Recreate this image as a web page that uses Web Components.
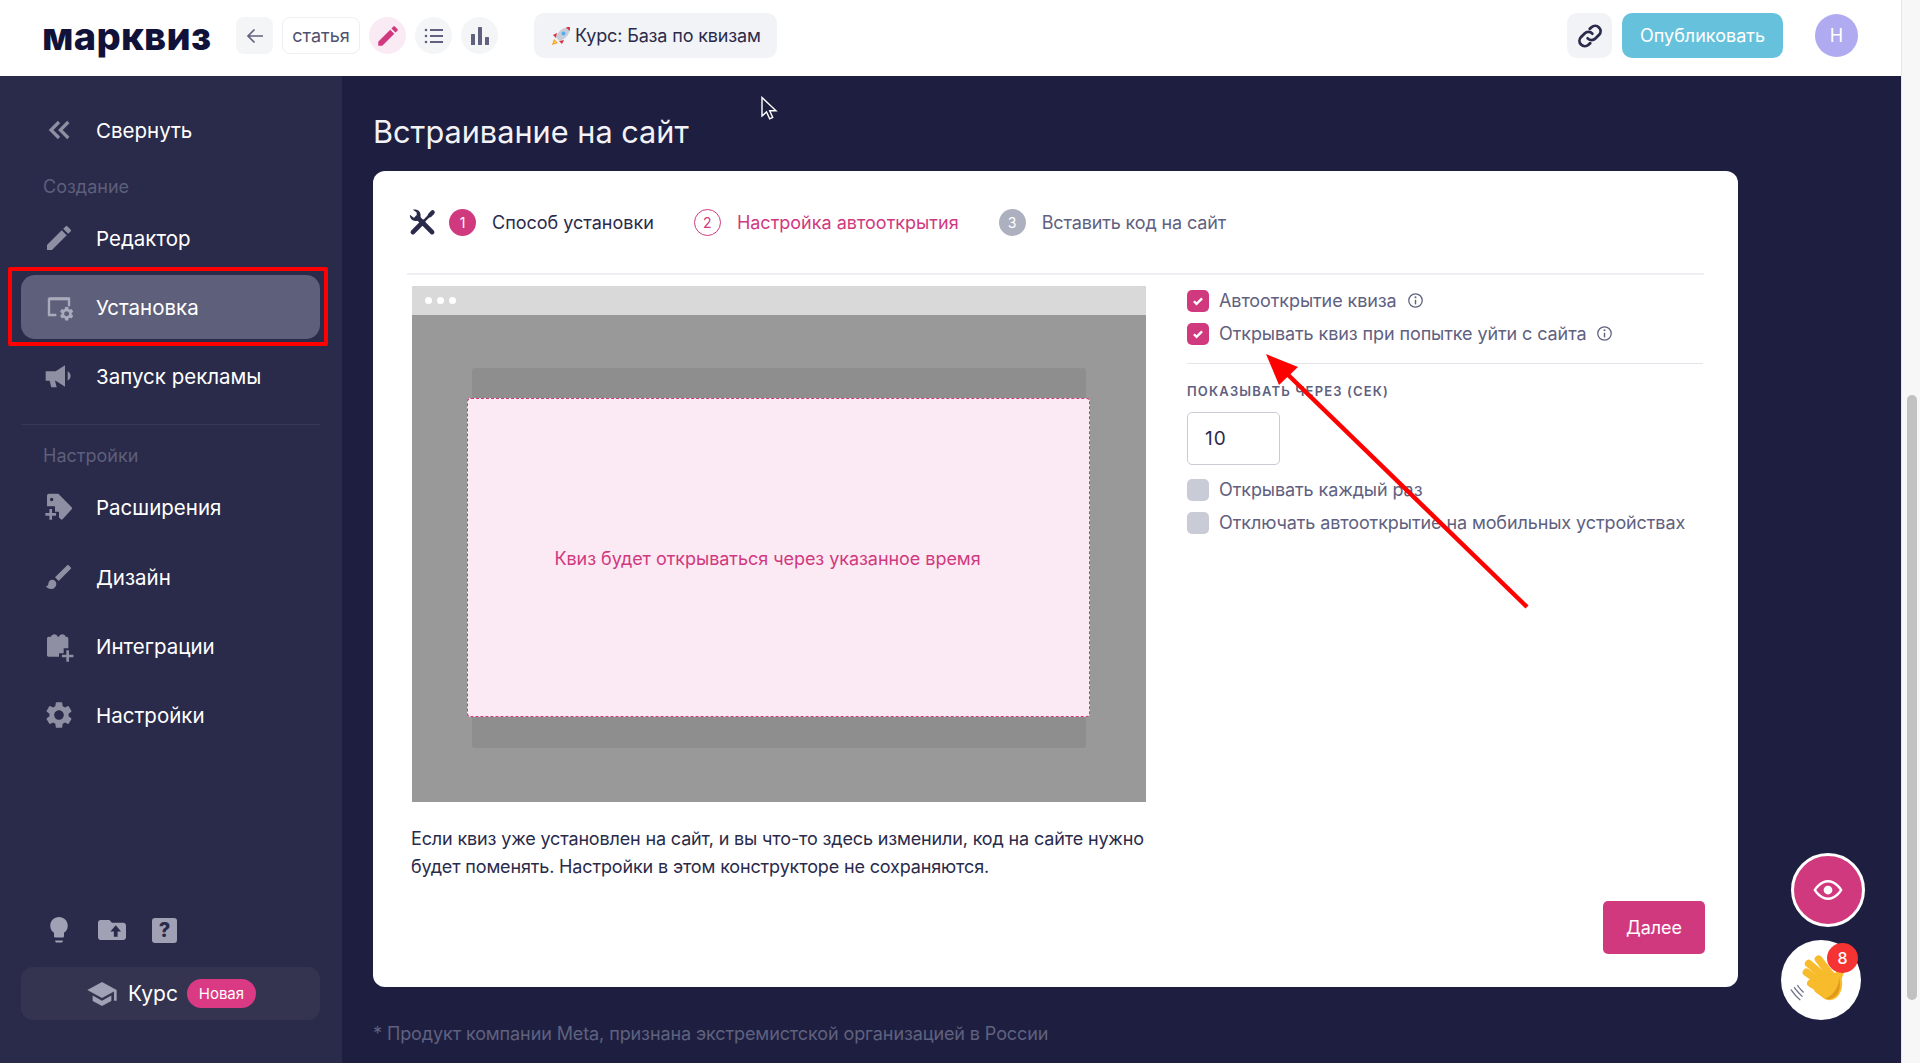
<!DOCTYPE html>
<html lang="ru">
<head>
<meta charset="utf-8">
<title>Марквиз</title>
<style>
  html, body { margin: 0; height: 100%; overflow: hidden; }
  body { font-family: Inter, "Noto Sans", sans-serif; background: #1e1f40; }
</style>
</head>
<body>
<app-shell>
  <app-header slot="header"></app-header>
  <app-sidebar slot="sidebar"></app-sidebar>
  <app-page slot="page"></app-page>
</app-shell>

<script>
const GEAR = 'M19.14 12.94c.04-.3.06-.61.06-.94 0-.32-.02-.64-.07-.94l2.03-1.58c.18-.14.23-.41.12-.61l-1.92-3.32c-.12-.22-.37-.29-.59-.22l-2.39.96c-.5-.38-1.03-.7-1.62-.94L14.4 2.81c-.04-.24-.24-.41-.48-.41h-3.84c-.24 0-.43.17-.47.41L9.25 5.35c-.59.24-1.13.57-1.62.94l-2.39-.96c-.22-.08-.47 0-.59.22L2.74 8.87c-.12.21-.08.47.12.61l2.03 1.58c-.05.3-.09.63-.09.94s.02.64.07.94l-2.03 1.58c-.18.14-.23.41-.12.61l1.92 3.32c.12.22.37.29.59.22l2.39-.96c.5.38 1.03.7 1.62.94l.36 2.54c.05.24.24.41.48.41h3.84c.24 0 .44-.17.47-.41l.36-2.54c.59-.24 1.13-.56 1.62-.94l2.39.96c.22.08.47 0 .59-.22l1.92-3.32c.12-.22.07-.47-.12-.61l-2.01-1.58zM12 15.6c-1.98 0-3.6-1.62-3.6-3.6s1.62-3.6 3.6-3.6 3.6 1.62 3.6 3.6-1.62 3.6-3.6 3.6z';
const PENCIL = 'M3 17.25V21h3.75L17.81 9.94l-3.75-3.75L3 17.25zM20.71 7.04c.39-.39.39-1.02 0-1.41l-2.34-2.34c-.39-.39-1.02-.39-1.41 0l-1.83 1.83 3.75 3.75 1.83-1.83z';

const ICONS = {
  pencil: `<path d="${PENCIL}"/>`,
  collapse: `<path d="M12 6l-6 6 6 6M19 6l-6 6 6 6" fill="none" stroke="currentColor" stroke-width="2.4"/>`,
  install: `<path d="M4 5h15v2H4z"/><path d="M4.5 5.5h15v6M10 18H4.5V5.5" fill="none" stroke="currentColor" stroke-width="1.8"/><g transform="translate(11.5 10.8) scale(.52)"><path d="${GEAR}"/></g>`,
  megaphone: `<path d="M2 8.5h7.5L16.5 4v16l-7-4.500H9l1.300 5H6.200L5 15.500H2z"/><path d="M18.500 8.500c1.300.7 2.200 2 2.200 3.500s-.9 2.800-2.200 3.500z"/>`,
  extension: `<path fill-rule="evenodd" d="M3 3.500c0-.8.7-1.500 1.500-1.500h7l10 10.200c.4.4.4 1 0 1.400l-6.800 7.500c-.4.400-1 .4-1.400 0l-1.300-1.300v-4.300H9V11.500H3zM6.500 5a1.300 1.300 0 1 0 0 2.600 1.300 1.300 0 0 0 0-2.600z"/><path d="M4.800 13.500h2v3h3v2h-3v3h-2v-3h-3v-2h3z"/>`,
  brush: `<path d="M7 14c-1.660 0-3 1.340-3 3 0 1.310-1.160 2-2 2 .92 1.220 2.490 2 4 2 2.210 0 4-1.790 4-4 0-1.660-1.340-3-3-3zm13.710-9.370l-1.340-1.340c-.39-.39-1.020-.39-1.410 0L9 12.250 11.750 15l8.960-8.960c.39-.39.39-1.030 0-1.410z"/>`,
  integrations: `<path d="M3 6.500c0-.8.5-1.500 1.300-1.500H6c.3-2.500 4.700-2.500 5 0h1c.3-2.500 4.700-2.500 5 0h.7c.8 0 1.300.7 1.300 1.500v7.200h-3.500v3.800H12V20H4.300c-.8 0-1.300-.6-1.300-1.300z"/><path d="M17.500 15.200h2v3.300h3.300v2h-3.300v3.300h-2v-3.300h-3.300v-2h3.300z"/>`,
  gear: `<path d="${GEAR}"/>`,
  bulb: `<path d="M9 21c0 .5.4 1 1 1h4c.6 0 1-.5 1-1v-.6H9zM12 1.500C8.100 1.500 5 4.600 5 8.500c0 2.400 1.200 4.500 3 5.700V17c0 .5.4 1 1 1h6c.6 0 1-.5 1-1v-2.800c1.800-1.200 3-3.300 3-5.700 0-3.900-3.100-7-7-7z"/>`,
  folder: `<path d="M20.500 6.500H12L10 4.500H3.500C2.400 4.500 1.500 5.400 1.500 6.500v11c0 1.100.9 2 2 2h17c1.100 0 2-.9 2-2v-9c0-1.100-.9-2-2-2z"/><path d="M14.800 8.500l4 4.600h-2.600v3.900h-2.800v-3.900h-2.600z" fill="#2a2a4a"/>`,
  cap: `<path d="M5 13.180v4L12 21l7-3.820v-4L12 17l-7-3.820zM12 3L1 9l11 6 9-4.910V17h2V9L12 3z"/>`,
  back: `<path d="M20 12H5M11.500 5.500L5 12l6.500 6.500" fill="none" stroke="currentColor" stroke-width="1.700"/>`,
  list: `<g fill="none" stroke="currentColor" stroke-width="1.800"><path d="M8 6h13M8 12h13M8 18h13"/></g><circle cx="4" cy="6" r="1.300"/><circle cx="4" cy="12" r="1.300"/><circle cx="4" cy="18" r="1.300"/>`,
  chart: `<rect x="3" y="10" width="4" height="11" rx=".6"/><rect x="10" y="3" width="4" height="18" rx=".6"/><rect x="17" y="13" width="4" height="8" rx=".6"/>`,
  link: `<g fill="none" stroke="currentColor" stroke-width="2.400" stroke-linecap="round"><path d="M10 14a4.600 4.600 0 0 0 6.600.2l3.200-3.200a4.600 4.600 0 0 0-6.500-6.500l-1.500 1.400"/><path d="M14 10a4.600 4.600 0 0 0-6.600-.2l-3.200 3.200a4.600 4.600 0 0 0 6.500 6.500l1.500-1.400"/></g>`,
  tools: `<g fill="none" stroke="currentColor" stroke-linecap="round"><path d="M7.500 7.500L20.500 20.500" stroke-width="4.200"/><path d="M3.500 20.500L12.500 11.500" stroke-width="4.200"/><path d="M12.500 11.500L18 6" stroke-width="2.200"/><path d="M18.500 5.500L21 3" stroke-width="3.800"/></g><path d="M.8 5.200L4.200 7.800 7 6 6.700 2.800 3.400.6C6.800-.4 10.300 1.600 10.300 5.200v2.500L7.400 10.400C4 11.300.5 9.200.8 5.200z"/>`,
  eye: `<path d="M1.500 12S5.500 5 12 5s10.500 7 10.500 7-4 7-10.500 7S1.500 12 1.500 12z" fill="none" stroke="currentColor" stroke-width="2"/><circle cx="12" cy="12" r="3.500"/>`,
  info: `<circle cx="12" cy="12" r="9.500" fill="none" stroke="currentColor" stroke-width="1.800"/><path d="M12 11v6.500" stroke="currentColor" stroke-width="2"/><circle cx="12" cy="7.500" r="1.400"/>`,
  check: `<path d="M5 12.500l4.500 4.500L19 7.500" fill="none" stroke="currentColor" stroke-width="4"/>`,
};

class AppIcon extends HTMLElement {
  connectedCallback() {
    const size = this.getAttribute('size') || 24;
    this.attachShadow({mode: 'open'}).innerHTML = `
      <style>:host { display: inline-flex; flex: none; } svg { display: block; fill: currentColor; overflow: visible; }</style>
      <svg width="${size}" height="${size}" viewBox="0 0 24 24">${ICONS[this.getAttribute('name')]}</svg>`;
  }
}
customElements.define('app-icon', AppIcon);

const shellTemplate = document.createElement('template');
shellTemplate.innerHTML = `
  <style>
    :host {
      display: grid;
      grid: 76px 987px / 342px 1559px 19px;
      grid-template-areas: "header header bar" "sidebar page bar";
      height: 1063px;
      overflow: hidden;
    }
    .header { grid-area: header; }
    .sidebar { grid-area: sidebar; display: grid; }
    .page { grid-area: page; display: grid; }
    .bar {
      grid-area: bar;
      background: #f7f7f8;
      border-left: 1px solid #e6e6e8;
      padding: 395px 3px 63px 5px;
      box-sizing: border-box;
      display: flex;
    }
    .bar i { flex: 1; background: #c1c1c1; border-radius: 6px; }
  </style>
  <div class="header"><slot name="header"></slot></div>
  <div class="sidebar"><slot name="sidebar"></slot></div>
  <div class="page"><slot name="page"></slot></div>
  <div class="bar"><i></i></div>
`;
class AppShell extends HTMLElement {
  constructor() {
    super();
    this.attachShadow({mode: 'open'});
    this.shadowRoot.append(shellTemplate.content.cloneNode(true));
  }
}
customElements.define('app-shell', AppShell);

const headerTemplate = document.createElement('template');
headerTemplate.innerHTML = `
  <style>
    :host {
      display: flex;
      align-items: center;
      height: 76px;
      background: #fff;
      padding: 0 43px 5px 41px;
      box-sizing: border-box;
      color: #5f617f;
    }
    .logo {
      font-size: 38px;
      font-weight: 800;
      color: #11123a;
      width: 194px;
      margin-left: 1px;
      letter-spacing: .3px;
      line-height: 46px;
    }
    .btn {
      height: 37px;
      width: 37px;
      background: #f4f5f7;
      border-radius: 8px;
      display: flex;
      align-items: center;
      justify-content: center;
      margin-right: 9px;
      box-sizing: border-box;
    }
    .round { border-radius: 50%; }
    .name {
      width: 78px;
      background: #fff;
      border: 1px solid #eeeff2;
      font-size: 18px;
      color: #4f5170;
    }
    .on { background: #faeaf3; color: #d1397f; }
    .course {
      margin-left: 36px;
      padding-left: 17px;
      height: 45px;
      width: 243px;
      background: #f2f3f6;
      border-radius: 10px;
      box-sizing: border-box;
      display: flex;
      align-items: center;
      gap: 4px;
      font-size: 18px;
      letter-spacing: -.15px;
      color: #2a2b4b;
      white-space: nowrap;
    }
    .spacer { flex: 1; }
    .share {
      width: 45px;
      height: 45px;
      margin-right: 10px;
      background: #f2f3f6;
      border-radius: 10px;
      color: #2a2b4b;
      display: flex;
      align-items: center;
      justify-content: center;
    }
    .publish {
      width: 161px;
      height: 45px;
      background: #66c2dc;
      border-radius: 10px;
      color: #fff;
      font-size: 18px;
      display: flex;
      align-items: center;
      justify-content: center;
    }
    .avatar {
      margin-left: 32px;
      width: 43px;
      height: 43px;
      border-radius: 50%;
      background: #b0aaf0;
      color: #fff;
      font-size: 18px;
      display: flex;
      align-items: center;
      justify-content: center;
    }
  </style>
  <div class="logo">марквиз</div>
  <div class="btn"><app-icon name="back" size="24"></app-icon></div>
  <div class="btn name">статья</div>
  <div class="btn round on"><app-icon name="pencil" size="26"></app-icon></div>
  <div class="btn round"><app-icon name="list" size="24"></app-icon></div>
  <div class="btn round" style="margin-right:0"><app-icon name="chart" size="24"></app-icon></div>
  <div class="course">
    <svg width="20" height="20" viewBox="0 0 20 20">
      <path d="M3 13l-2 6 6-2z" fill="#f59a23"/>
      <path d="M3.500 14.500l-1 3 3-1z" fill="#ffd23f"/>
      <path d="M2 9l4-2-1 5zM11 18l2-4-5 1z" fill="#dd2e44"/>
      <path d="M5 11.500C7 5 12 1 19 1c0 7-4 12-10.500 14z" fill="#c6cdd8"/>
      <path d="M15 1.400c1.500-.3 2.800-.4 4-.4 0 1.200-.1 2.600-.4 4z" fill="#dd2e44"/>
      <circle cx="12.500" cy="7.500" r="2" fill="#55acee"/>
    </svg>
    <span>Курс: База по квизам</span>
  </div>
  <div class="spacer"></div>
  <div class="share"><app-icon name="link" size="28"></app-icon></div>
  <div class="publish">Опубликовать</div>
  <div class="avatar">Н</div>
`;
class AppHeader extends HTMLElement {
  constructor() {
    super();
    this.attachShadow({mode: 'open'});
    this.shadowRoot.append(headerTemplate.content.cloneNode(true));
  }
}
customElements.define('app-header', AppHeader);

const navTemplate = document.createElement('template');
navTemplate.innerHTML = `
  <style>
    :host {
      display: flex;
      align-items: center;
      position: relative;
      height: 64px;
      margin-bottom: 5px;
      padding-left: 22px;
      border-radius: 14px;
      font-size: 20.500px;
      color: #fff;
    }
    :host([active]) { background: #5e5f7a; }
    :host([marked])::after {
      content: "";
      position: absolute;
      inset: -8px -8px -7px -13px;
      border: 4px solid #f00;
      border-radius: 2px;
    }
    .icon { width: 32px; margin-right: 21px; color: #8e8fa3; display: flex; }
    :host([active]) .icon { color: #a9aabb; }
  </style>
  <div class="icon"></div>
  <slot></slot>
`;
class NavItem extends HTMLElement {
  constructor() {
    super();
    this.attachShadow({mode: 'open'});
    this.shadowRoot.append(navTemplate.content.cloneNode(true));
  }
  connectedCallback() {
    const icon = document.createElement('app-icon');
    icon.setAttribute('name', this.getAttribute('icon'));
    icon.setAttribute('size', this.getAttribute('icon-size') || 32);
    this.shadowRoot.querySelector('.icon').append(icon);
  }
}
customElements.define('nav-item', NavItem);

const sidebarTemplate = document.createElement('template');
sidebarTemplate.innerHTML = `
  <style>
    :host {
      display: flex;
      flex-direction: column;
      background: #2a2a4a;
      padding: 22px 22px 43px 21px;
      box-sizing: border-box;
      height: 987px;
    }
    .label {
      font-size: 18px;
      color: #5e5f7b;
      padding-left: 22px;
      height: 44px;
      line-height: 49px;
    }
    .label.second { height: 50px; line-height: 62px; }
    hr { border: 0; height: 1px; background: #373757; margin: 16px 0 0; }
    .tools {
      margin-top: auto;
      display: flex;
      align-items: center;
      padding-left: 23px;
      margin-bottom: 22px;
      color: #a0a1b4;
      height: 30px;
    }
    .tools app-icon { margin-right: 22px; }
    .help {
      width: 25px;
      height: 25px;
      background: #a0a1b4;
      border-radius: 3px;
      color: #2a2a4a;
      font-size: 20px;
      font-weight: 800;
      text-align: center;
      line-height: 25px;
      margin-left: 2px;
    }
    .course {
      height: 53px;
      background: #353450;
      border-radius: 12px;
      display: flex;
      align-items: center;
      padding-left: 65px;
      color: #fff;
      font-size: 21px;
    }
    .course app-icon { color: #a0a1b4; margin-right: 10px; }
    .badge {
      margin-left: 9px;
      width: 69px;
      height: 29px;
      background: #d93a83;
      border-radius: 15px;
      font-size: 15px;
      display: flex;
      align-items: center;
      justify-content: center;
    }
  </style>
  <nav-item icon="collapse" style="margin-bottom:0">Свернуть</nav-item>
  <div class="label">Создание</div>
  <nav-item icon="pencil">Редактор</nav-item>
  <nav-item icon="install" active marked>Установка</nav-item>
  <nav-item icon="megaphone" style="margin-bottom:0">Запуск рекламы</nav-item>
  <hr>
  <div class="label second">Настройки</div>
  <nav-item icon="extension" style="margin-bottom:6px">Расширения</nav-item>
  <nav-item icon="brush">Дизайн</nav-item>
  <nav-item icon="integrations">Интеграции</nav-item>
  <nav-item icon="gear">Настройки</nav-item>
  <div class="tools">
    <app-icon name="bulb" size="30"></app-icon>
    <app-icon name="folder" size="32"></app-icon>
    <div class="help">?</div>
  </div>
  <div class="course">
    <app-icon name="cap" size="32"></app-icon>
    <span>Курс</span>
    <span class="badge">Новая</span>
  </div>
`;
class AppSidebar extends HTMLElement {
  constructor() {
    super();
    this.attachShadow({mode: 'open'});
    this.shadowRoot.append(sidebarTemplate.content.cloneNode(true));
  }
}
customElements.define('app-sidebar', AppSidebar);

const stepTemplate = document.createElement('template');
stepTemplate.innerHTML = `
  <style>
    :host {
      display: flex;
      align-items: center;
      gap: 16px;
      font-size: 18px;
      color: #2a2b4b;
      white-space: nowrap;
    }
    .num {
      width: 27px;
      height: 27px;
      border-radius: 50%;
      box-sizing: border-box;
      background: #d1397f;
      color: #fff;
      font-size: 14px;
      display: flex;
      align-items: center;
      justify-content: center;
    }
    :host([state="current"]) { color: #d1397f; }
    :host([state="current"]) .num { background: #fff; border: 1.500px solid #d1397f; color: #d1397f; }
    :host([state="next"]) { color: #5f617f; letter-spacing: -.13px; }
    :host([state="next"]) .num { background: #adb0bf; }
  </style>
  <div class="num"></div>
  <slot></slot>
`;
class AppStep extends HTMLElement {
  constructor() {
    super();
    this.attachShadow({mode: 'open'});
    this.shadowRoot.append(stepTemplate.content.cloneNode(true));
  }
  connectedCallback() {
    this.shadowRoot.querySelector('.num').textContent = this.getAttribute('num');
  }
}
customElements.define('app-step', AppStep);

const checkTemplate = document.createElement('template');
checkTemplate.innerHTML = `
  <style>
    :host {
      display: flex;
      align-items: center;
      height: 33px;
      font-size: 18px;
      letter-spacing: -.1px;
      color: #5f617f;
      white-space: nowrap;
    }
    .box {
      width: 22px;
      height: 22px;
      border-radius: 5px;
      background: #c9cbd6;
      margin-right: 10px;
      color: #fff;
      display: flex;
      align-items: center;
      justify-content: center;
    }
    .box app-icon { display: none; }
    :host([checked]) .box { background: #d1397f; }
    :host([checked]) .box app-icon { display: inline-flex; }
    .info { margin-left: 10px; display: none; }
    :host([info]) .info { display: inline-flex; }
  </style>
  <div class="box"><app-icon name="check" size="14"></app-icon></div>
  <slot></slot>
  <app-icon class="info" name="info" size="17"></app-icon>
`;
class AppCheck extends HTMLElement {
  constructor() {
    super();
    this.attachShadow({mode: 'open'});
    this.shadowRoot.append(checkTemplate.content.cloneNode(true));
  }
}
customElements.define('app-check', AppCheck);

const previewTemplate = document.createElement('template');
previewTemplate.innerHTML = `
  <style>
    :host { display: block; width: 734px; height: 516px; background: #999; border-radius: 3px 3px 0 0; overflow: hidden; }
    .bar { height: 29px; background: #d9d9d9; display: flex; align-items: center; gap: 5px; padding-left: 13px; box-sizing: border-box; }
    .bar i { width: 7px; height: 7px; border-radius: 50%; background: #fff; }
    .back {
      margin: 53px 60px 0 60px;
      height: 380px;
      background: #8e8e8e;
      border-radius: 3px;
      padding-top: 30px;
      box-sizing: border-box;
    }
    .quiz {
      margin: 0 -4px 0 -5px;
      height: 319px;
      background: #fbeaf3;
      border: 1.500px dashed #d1397f;
      border-radius: 4px;
      box-sizing: border-box;
      color: #d1397f;
      font-size: 18px;
      letter-spacing: -.05px;
      display: flex;
      align-items: center;
      justify-content: center;
    }
    .quiz span { margin-right: 22px; margin-top: 2px; }
  </style>
  <div class="bar"><i></i><i></i><i></i></div>
  <div class="back"><div class="quiz"><span>Квиз будет открываться через указанное время</span></div></div>
`;
class AppPreview extends HTMLElement {
  constructor() {
    super();
    this.attachShadow({mode: 'open'});
    this.shadowRoot.append(previewTemplate.content.cloneNode(true));
  }
}
customElements.define('app-preview', AppPreview);

const pageTemplate = document.createElement('template');
pageTemplate.innerHTML = `
  <style>
    :host {
      display: block;
      position: relative;
      background: #1e1f40;
      padding: 0 0 0 31px;
      height: 987px;
      box-sizing: border-box;
    }
    h1 {
      margin: 0;
      height: 95px;
      font-size: 30.700px;
      font-weight: 400;
      line-height: 112px;
      color: #f2f2f7;
    }
    .card {
      width: 1365px;
      height: 816px;
      background: #fff;
      border-radius: 12px;
      padding: 38px 34px 33px;
      box-sizing: border-box;
      display: flex;
      flex-direction: column;
    }
    .steps { display: flex; align-items: center; height: 27px; }
    .tools { color: #2a2b4b; margin-right: 13px; margin-left: 2px; }
    .steps app-step { margin-right: 40px; }
    .rule { height: 2px; background: #eeeef5; margin-top: 37px; }
    .body { display: flex; margin-top: 11px; flex: 1; }
    .left { margin-left: 5px; width: 775px; }
    .left p { margin: 23px 0 0 -1px; font-size: 18px; letter-spacing: -.15px; line-height: 28px; color: #2a2b4b; white-space: nowrap; }
    .right { width: 516px; margin-top: -2px; }
    .hr { height: 1px; background: #e3e4ea; margin: 13px 0 19px; }
    .caption { font-size: 13px; font-weight: 600; letter-spacing: 1.150px; color: #5f617f; line-height: 16px; }
    .num {
      margin: 13px 0 8px;
      width: 93px;
      height: 53px;
      border: 1px solid #c9cbd6;
      border-radius: 5px;
      box-sizing: border-box;
      font-size: 19px;
      letter-spacing: 1px;
      color: #2a2b4b;
      padding-left: 17px;
      line-height: 51px;
    }
    .foot { display: flex; justify-content: flex-end; margin-right: -1px; }
    .next {
      width: 102px;
      height: 53px;
      background: #d1397f;
      border-radius: 5px;
      color: #fff;
      font-size: 18px;
      display: flex;
      align-items: center;
      justify-content: center;
    }
    .note { margin-top: 36px; font-size: 18px; letter-spacing: -.1px; color: #5f617f; line-height: 22px; }
    .cursor { position: absolute; left: 418px; top: 20px; }
    .arrow { position: absolute; left: 0; top: 0; pointer-events: none; }
    .fab { position: absolute; border-radius: 50%; display: flex; align-items: center; justify-content: center; }
    .eye { left: 1449px; top: 777px; width: 74px; height: 74px; background: #d1397f; border: 3px solid #fff; box-sizing: border-box; color: #fff; }
    .hand { left: 1439px; top: 864px; width: 80px; height: 80px; background: #fff; }
    .count {
      position: absolute;
      left: 1485px;
      top: 867px;
      width: 31px;
      height: 30px;
      border-radius: 50%;
      background: #f53333;
      color: #fff;
      font-size: 16px;
      font-weight: 500;
      display: flex;
      align-items: center;
      justify-content: center;
    }
  </style>
  <h1>Встраивание на сайт</h1>
  <div class="card">
    <div class="steps">
      <app-icon class="tools" name="tools" size="27"></app-icon>
      <app-step num="1">Способ установки</app-step>
      <app-step num="2" state="current">Настройка автооткрытия</app-step>
      <app-step num="3" state="next">Вставить код на сайт</app-step>
    </div>
    <div class="rule"></div>
    <div class="body">
      <div class="left">
        <app-preview></app-preview>
        <p>Если квиз уже установлен на сайт, и вы что-то здесь изменили, код на сайте нужно<br>будет поменять. Настройки в этом конструкторе не сохраняются.</p>
      </div>
      <div class="right">
        <app-check checked info>Автооткрытие квиза</app-check>
        <app-check checked info>Открывать квиз при попытке уйти с сайта</app-check>
        <div class="hr"></div>
        <div class="caption">ПОКАЗЫВАТЬ ЧЕРЕЗ (СЕК)</div>
        <div class="num">10</div>
        <app-check>Открывать каждый раз</app-check>
        <app-check>Отключать автооткрытие на мобильных устройствах</app-check>
      </div>
    </div>
    <div class="foot"><div class="next">Далее</div></div>
  </div>
  <div class="note">* Продукт компании Meta, признана экстремистской организацией в России</div>

  <svg class="arrow" width="1559" height="987" viewBox="342 76 1559 987">
    <path d="M1527 607L1280 367" stroke="#f00" stroke-width="4.500" fill="none"/>
    <path d="M1266 354L1298 367L1279 385z" fill="#f00"/>
  </svg>
  <svg class="cursor" width="18" height="25" viewBox="0 0 18 25">
    <path d="M2 1.500v18.500l4.500-4 3.200 6.800 3-1.400-3-6.600h6.300z" fill="#1e1f40" stroke="#fff" stroke-width="1.400"/>
  </svg>

  <div class="fab eye"><app-icon name="eye" size="30"></app-icon></div>
  <div class="fab hand">
    <svg width="70" height="70" viewBox="0 0 64 64" style="margin-left:5px">
      <g fill="none" stroke="#6f7189" stroke-width="1.200" stroke-linecap="round">
        <path d="M2 41c2 3 4 6 8 9M5 39c2 3 4 5 7 8M8 37c1 2 3 4 5 6"/>
        <path d="M43 14c2 1 4 3 5 5M46 11c2 1 4 3 6 6"/>
      </g>
      <g stroke="#f7bb2b" stroke-linecap="round" fill="none" stroke-width="7">
        <path d="M41 31L27 13"/>
        <path d="M36 32L18 17"/>
        <path d="M33 37L16 25"/>
        <path d="M33 43L20 35"/>
        <path d="M43 35L47 24"/>
      </g>
      <path d="M28 27L46 25c3 6 4 14 0 20-3 5-9 7-14 4l-8-6c-3-3 0-12 4-16z" fill="#f7bb2b"/>
      <path d="M46 30c1 6 1 11-2 15-3 4-7 5-11 4 6-2 12-8 13-19z" fill="#e0991a"/>
    </svg>
  </div>
  <div class="count">8</div>
`;
class AppPage extends HTMLElement {
  constructor() {
    super();
    this.attachShadow({mode: 'open'});
    this.shadowRoot.append(pageTemplate.content.cloneNode(true));
  }
}
customElements.define('app-page', AppPage);
</script>
</body>
</html>
